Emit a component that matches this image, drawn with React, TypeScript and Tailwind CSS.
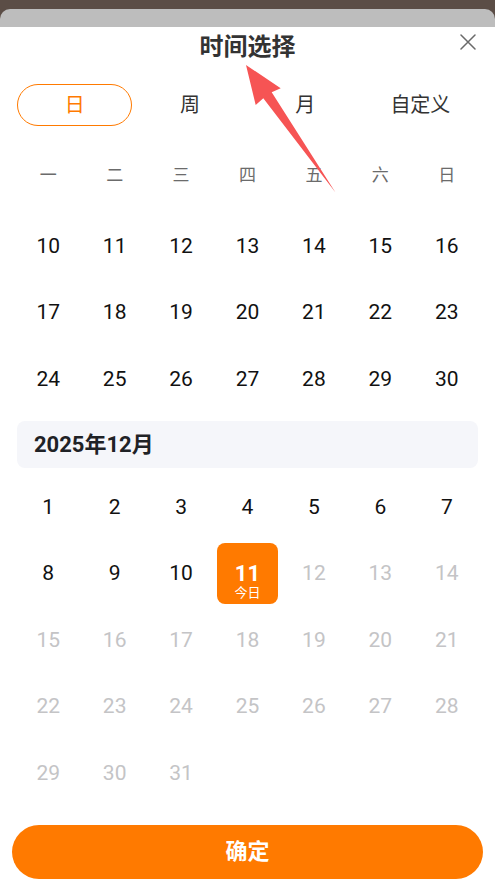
import React from "react";

const FONT = 'Roboto, "Noto Sans CJK SC", sans-serif';

function range(a: number, b: number) {
  const r: number[] = [];
  for (let i = a; i <= b; i++) r.push(i);
  return r;
}

const novRows = [range(10, 16), range(17, 23), range(24, 30)];
const decRows = [range(1, 7), range(8, 14), range(15, 21), range(22, 28), range(29, 31)];

function Row({ days, month }: { days: number[]; month: "nov" | "dec" }) {
  return (
    <div className="grid grid-cols-7 h-[66.5px]">
      {days.map((d) => {
        const selected = month === "dec" && d === 11;
        const disabled = month === "dec" && d > 11;
        if (selected) {
          return (
            <div key={d} className="flex items-center justify-center">
              <div className="relative w-[61px] h-[61px] rounded-[8px] bg-[#ff7a00] flex items-center justify-center">
                <span className="text-[22px] leading-none font-bold text-white">{d}</span>
                <span className="absolute bottom-[5px] left-0 right-0 text-center text-[13px] leading-[13px] text-white">今日</span>
              </div>
            </div>
          );
        }
        return (
          <div
            key={d}
            className={
              "flex items-center justify-center text-[21px] leading-none " +
              (disabled ? "text-[#c4c4c6]" : "text-[#111111]")
            }
          >
            {d}
          </div>
        );
      })}
    </div>
  );
}

export default function App() {
  const weekdays = ["一", "二", "三", "四", "五", "六", "日"];
  const tabs = ["日", "周", "月", "自定义"];
  return (
    <div className="relative w-[495px] h-[884px] bg-[#5b4d46] overflow-hidden" style={{ fontFamily: FONT }}>
      <div className="pt-[9px]">
        <div className="h-[18px] bg-[#bdbdbd] rounded-t-[10px]" />
      </div>
      <div className="relative bg-white h-[857px] flex flex-col">
        <div className="h-[40px] flex items-center justify-center">
          <span className="text-[24px] leading-none font-bold text-[#333333]">时间选择</span>
        </div>
        <svg
          className="absolute top-[7px] right-[19px]"
          width="16"
          height="16"
          viewBox="0 0 16 16"
          fill="none"
        >
          <path d="M1 1L15 15M15 1L1 15" stroke="#6a6a6a" strokeWidth="1.5" strokeLinecap="round" />
        </svg>

        <div className="mt-[17px] mx-[17px] grid grid-cols-4 h-[42px]">
          {tabs.map((t, i) => (
            <div
              key={t}
              className={
                "flex items-center justify-center text-[20px] leading-none " +
                (i === 0
                  ? "border-[1.5px] border-[#ff7a00] rounded-full text-[#ff7a00]"
                  : "text-[#333333]")
              }
            >
              {t}
            </div>
          ))}
        </div>

        <div className="mt-[24px] px-[15px] grid grid-cols-7 h-[50px]">
          {weekdays.map((w) => (
            <div key={w} className="flex items-center justify-center text-[17px] leading-none text-[#6b6b6b]">
              {w}
            </div>
          ))}
        </div>

        <div className="mt-[13px] px-[15px]">
          {novRows.map((r, i) => (
            <Row key={i} days={r} month="nov" />
          ))}
        </div>

        <div className="mt-[8.5px] mx-[17px] h-[47px] rounded-[8px] bg-[#f5f6fa] flex items-center pl-[17px]">
          <span className="text-[22px] leading-none font-bold text-[#1f2226]">2025年12月</span>
        </div>

        <div className="mt-[5.75px] px-[15px]">
          {decRows.map((r, i) => (
            <Row key={i} days={r} month="dec" />
          ))}
        </div>

        <div className="mt-[18.75px] mx-[12px] h-[54px] rounded-full bg-[#ff7a00] flex items-center justify-center">
          <span className="text-[22px] leading-none font-bold text-white">确定</span>
        </div>
      </div>

      <svg className="absolute left-0 top-0 pointer-events-none" width="495" height="884" viewBox="0 0 495 884">
        <polygon
          points="246,65 280.7,88.3 271.7,92.3 335.5,192.5 263.3,98.3 255.7,105"
          fill="#f65454"
        />
      </svg>
    </div>
  );
}
